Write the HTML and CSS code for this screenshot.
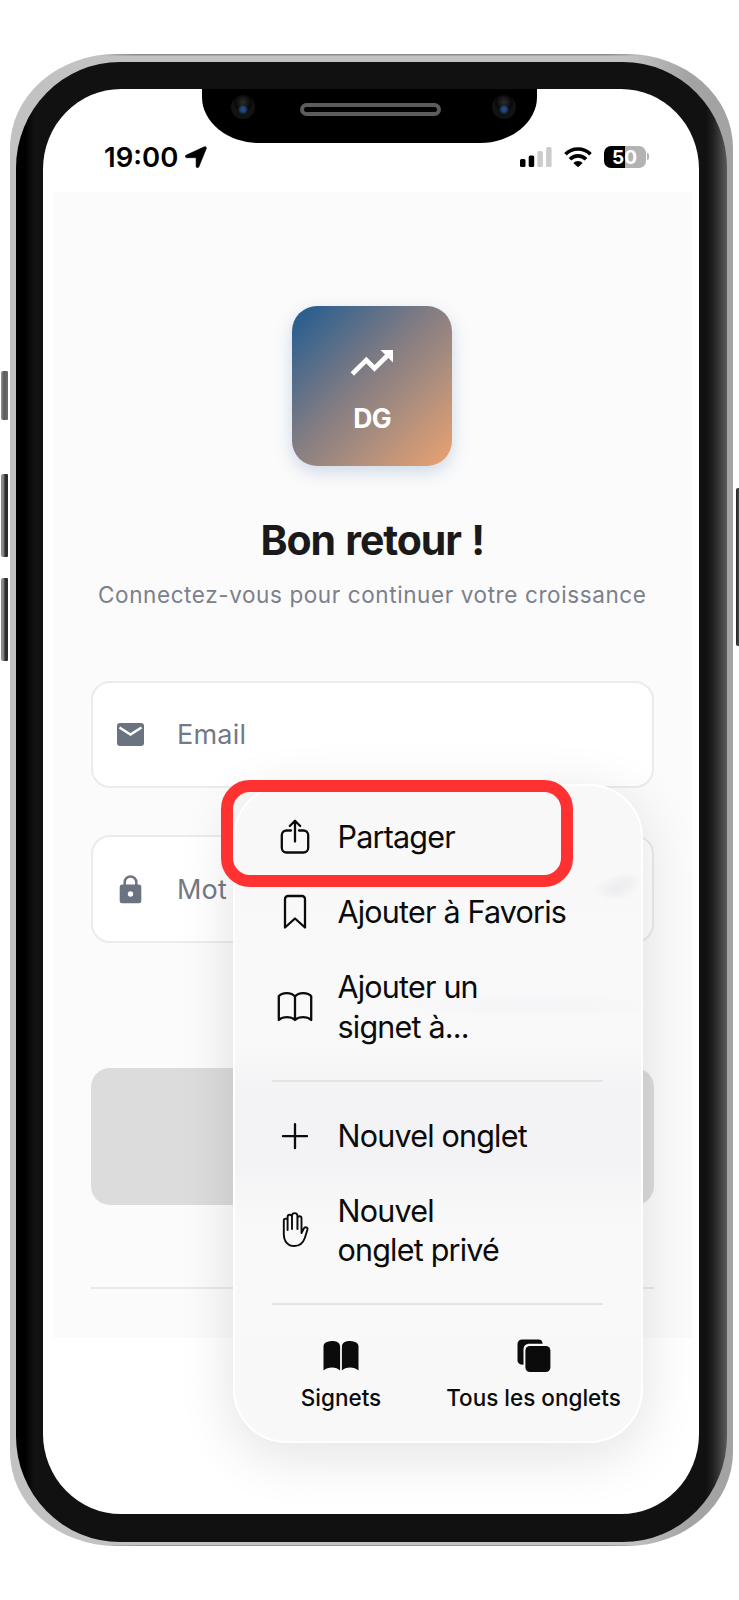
FILE: index.html
```
<!DOCTYPE html>
<html lang="fr">
<head>
<meta charset="utf-8">
<title>Bon retour</title>
<link rel="stylesheet" href="styles.css">
</head>
<body>
<div class="phone">
  <span class="side-button mute"></span>
  <span class="side-button volume-up"></span>
  <span class="side-button volume-down"></span>
  <span class="side-button power"></span>
  <div class="bezel">
    <div class="screen">
      <div class="notch">
        <span class="camera"></span>
        <span class="speaker"></span>
        <span class="camera"></span>
      </div>
      <header class="status">
        <span class="time">19:00</span>
        <svg class="location" width="22" height="22" viewBox="0 0 22 22"><path d="M1 9.200 19.300.8c1.400-.6 2.500.6 1.900 2L13.900 20.700c-.6 1.500-2.800 1.200-2.800-.5v-8.500H1.800c-1.600 0-2.200-1.800-.8-2.500z" stroke="#000" stroke-width=".6"/></svg>
        <svg class="signal" width="33" height="22" viewBox="0 0 33 22"><rect x="0" y="13" width="5.500" height="8" rx="1.500"/><rect x="8.700" y="9.500" width="5.500" height="11.500" rx="1.500"/><g fill="#ccc"><rect x="17.400" y="5" width="5.500" height="16" rx="1.500"/><rect x="26.100" y="1" width="5.500" height="20" rx="1.500"/></g></svg>
        <svg class="wifi" width="28" height="22" viewBox="0 0 28 22"><g fill="none" stroke="#000" stroke-width="3.700"><path d="M1.500 8.200a17.600 17.600 0 0 1 25 0"/><path d="M6 13.200a11.300 11.300 0 0 1 16 0"/></g><path d="M14 21.300 9.300 16.900a6.600 6.600 0 0 1 9.400 0z"/></svg>
        <span class="battery">50</span><span class="battery-tip"></span>
      </header>
      <main class="app">
        <div class="logo">
          <svg width="44" height="28" viewBox="0 0 44 28"><path d="M2.300 25 16.300 11l8.200 8.500L38 6" fill="none" stroke="#fff" stroke-width="4.700"/><path d="M30.500 1H43v12.500z" fill="#fff"/></svg>
          <span>DG</span>
        </div>
        <h1>Bon retour !</h1>
        <p class="subtitle">Connectez-vous pour continuer votre croissance</p>
        <div class="field">
          <svg width="27" height="23" viewBox="0 0 27 23"><rect width="27" height="23" rx="3" fill="#6b7280"/><path d="M2.500 4.500 13.500 11.500 24.500 4.500" fill="none" stroke="#fff" stroke-width="2.400"/></svg>
          <span>Email</span>
        </div>
        <div class="field">
          <svg width="27" height="29" viewBox="0 0 27 29"><path d="M7.700 11V7.300a5.800 5.800 0 0 1 11.600 0V11" fill="none" stroke="#6b7280" stroke-width="2.500"/><rect x="2.700" y="9.500" width="21.600" height="18.800" rx="2.500" fill="#6b7280"/><circle cx="13.500" cy="19" r="2.700" fill="#fff"/></svg>
          <span>Mot</span>
        </div>
        <div class="submit"></div>
        <div class="rule"></div>
      </main>
      <nav class="menu">
        <div class="item"><svg width="36" height="38" viewBox="0 0 36 38"><path d="M14 12.500H9.500a4.700 4.700 0 0 0-4.700 4.700v12.600a4.700 4.700 0 0 0 4.700 4.700h17a4.700 4.700 0 0 0 4.700-4.700V17.200a4.700 4.700 0 0 0-4.700-4.700H22M18 23.500V3M12.800 8 18 2.800 23.200 8"/></svg><span>Partager</span></div>
        <div class="item"><svg width="36" height="38" viewBox="0 0 36 38"><path d="M8 34.500V6a3 3 0 0 1 3-3h14a3 3 0 0 1 3 3v28.500L18 25.500z"/></svg><span>Ajouter à Favoris</span></div>
        <div class="item"><svg width="36" height="38" viewBox="0 0 36 38"><path d="M18 8.500C14.500 4 5 4 1.800 8.300V32C6 28.300 14 28.300 18 32c4-3.700 12-3.700 16.200 0V8.300C31 4 21.500 4 18 8.500V32"/></svg><span>Ajouter un<br>signet à...</span></div>
        <hr>
        <div class="item"><svg width="36" height="38" viewBox="0 0 36 38"><path d="M18 7.200v24M6 19.200h24"/></svg><span>Nouvel onglet</span></div>
        <div class="item"><svg class="hand" width="36" height="38" viewBox="0 0 36 38"><path d="M10.600 19V9.500a1.900 1.900 0 0 0-3.800 0V23c0 7.500 4.200 12 10.500 12 5.500 0 8.800-3 10.500-8l2.600-8.200c.7-2.600-2.400-3.600-3.600-1.300l-2.300 4.600V7.300a2 2 0 0 0-4 0V18M10.600 10V6a2.200 2.200 0 0 1 4.400 0v12M15 8V4.800a2.700 2.700 0 0 1 5.400 0V18"/></svg><span>Nouvel<br>onglet privé</span></div>
        <hr>
        <div class="tabs">
          <div class="tab signets"><svg width="36" height="34" viewBox="0 0 36 34"><path d="M17.100 31.500C13.500 27.600 4.500 27.600.5 31.500V7.500C.5 2.500 7 2 9.500 2s7.600 1 7.600 5.500zM18.900 31.500c3.600-3.900 12.600-3.900 16.600 0V7.500C35.500 2.500 29 2 26.500 2s-7.600 1-7.600 5.500z"/></svg><span>Signets</span></div>
          <div class="tab onglets"><svg width="34" height="34" viewBox="0 0 34 34"><path d="M5 .5h16.500c2.500 0 4 1.500 4.200 4.200H12.500c-4 0-6 2.200-6 6v15C2.500 25.700.5 24 .5 21.500V5A4.500 4.500 0 0 1 5 .5z"/><rect x="8.400" y="7" width="25" height="26" rx="4.500"/></svg><span>Tous les onglets</span></div>
        </div>
      </nav>
      <div class="highlight"></div>
    </div>
  </div>
</div>
</body>
</html>
```
FILE: styles.css
```
* { box-sizing: border-box; }
body {
  margin: 0;
  padding: 54px 6px 0 9.500px;
  height: 1600px;
  overflow: hidden;
  background: #fff;
  font-family: Inter, "Liberation Sans", sans-serif;
}
svg { display: block; flex: none; }

.phone {
  position: relative;
  width: 723.500px;
  height: 1492px;
  padding: 7.500px 6px 4.500px;
  border-radius: 106px / 94px;
  background:
    linear-gradient(90deg, transparent, #8c8c8c 8% 92%, transparent) 50% 0 / 560px 1.500px no-repeat,
    linear-gradient(90deg, transparent, #999 8% 92%, transparent) 50% 100% / 560px 1px no-repeat,
    linear-gradient(90deg, #c2c2c2 0 86%, #a3a3a3 94%);
}
.side-button {
  position: absolute;
  left: -8.500px;
  width: 6.500px;
  border-radius: 2px 1px 1px 2px;
  background: linear-gradient(90deg, #8d8d8d 30%, #2e2e2e 60%);
}
.mute { top: 317px; height: 49px; background: linear-gradient(90deg, #999, #5c5c5c 40%, #6c6c6c); }
.volume-up { top: 420px; height: 83px; }
.volume-down { top: 524px; height: 83px; }
.power { left: 726.500px; top: 434px; width: 5px; height: 158px; background: linear-gradient(90deg, #222, #666); }

.bezel {
  height: 100%;
  padding: 27.500px 28px 28px 27.500px;
  border-radius: 104px / 106px;
  background: linear-gradient(90deg, #000 0 1.200%, #111 2.500% 97%, #202020 98%, #5a5a5a 100%);
}
.screen {
  position: relative;
  height: 100%;
  border-radius: 78px / 80px;
  overflow: hidden;
  background: #fff;
}
.notch {
  position: absolute;
  top: -1px;
  left: 158.500px;
  width: 335.500px;
  height: 55px;
  padding: 0 21px 16px 29px;
  display: flex;
  align-items: center;
  justify-content: space-between;
  border-radius: 0 0 57px 57px / 0 0 46px 46px;
  background: #000;
}
.camera {
  width: 24px;
  height: 24px;
  margin-top: -2px;
  border-radius: 50%;
  background: radial-gradient(circle at 50% 60%, #26497f 0 2px, #132849 4px, transparent 5px), radial-gradient(circle at 50% 30%, #2c2c2c 0, #111 6px, #080808 8px, #121212 10px);
}
.speaker {
  width: 141px;
  height: 13px;
  margin: 4px 5px 0 0;
  border: 4px solid #5c5c5c;
  border-radius: 7px;
}

.status {
  height: 102.500px;
  padding: 57px 0 0 61px;
  display: flex;
  align-items: flex-start;
}
.time {
  width: 81px;
  font-size: 27.500px;
  font-weight: 600;
  line-height: 23px;
}
.location { margin-left: 0; }
.signal { margin-left: 312.500px; }
.wifi { margin-left: 11.500px; }
.battery {
  width: 42px;
  height: 22.500px;
  margin: -.5px 0 0 11.500px;
  border-radius: 7px;
  background: linear-gradient(90deg, #000 50%, #b3b3b3 50%);
  color: #fff;
  font-size: 19px;
  font-weight: 700;
  line-height: 23px;
  text-align: center;
}
.battery-tip { width: 2px; height: 7px; margin: 7px 0 0 1px; border-radius: 0 3px 3px 0; background: #b3b3b3; }

.app {
  height: 1146.500px;
  margin: 0 7.500px 0 9.500px;
  padding: 114.500px 38px 0 38.500px;
  background: #fbfbfb;
}
.logo {
  width: 160px;
  height: 160px;
  margin: 0 auto;
  padding-top: 42.500px;
  display: flex;
  flex-direction: column;
  align-items: center;
  border-radius: 25px;
  background: linear-gradient(135deg, #2c5f8f 6%, #7f7b83 43%, #a98d7e 66%, #e8a172 98%);
  box-shadow: 0 6px 18px rgba(44, 95, 160, .22);
  color: #fff;
}
.logo span { margin-top: 24.500px; font-size: 26.500px; font-weight: 700; line-height: 34px; letter-spacing: -.5px; }
h1 {
  margin: 49px 0 15px;
  color: #1a1a1a;
  font-size: 41px;
  font-weight: 700;
  line-height: 50px;
  text-align: center;
  letter-spacing: -1.100px;
  word-spacing: 1.800px;
  white-space: nowrap;
}
.subtitle {
  margin: 0 -20px 70.500px;
  color: #7b808c;
  font-size: 22.500px;
  line-height: 30px;
  text-align: center;
  letter-spacing: .6px;
  white-space: nowrap;
}
.field {
  height: 107.500px;
  margin-bottom: 47px;
  padding: 1px 0 0 23.500px;
  display: flex;
  align-items: center;
  gap: 33.500px;
  border: 2px solid #ebebec;
  border-radius: 19px;
  background: #fff;
  color: #737985;
  font-size: 27px;
  letter-spacing: .2px;
}
.submit { height: 137.500px; margin-top: 125px; border-radius: 19px; background: #dcdcdc; }
.rule { height: 2px; margin-top: 82px; background: #e8e8ea; }

.menu {
  position: absolute;
  left: 189.500px;
  top: 694.500px;
  width: 410px;
  height: 659.500px;
  padding: 14px 0 0;
  border: 2px solid #fff;
  border-radius: 54px;
  background:
    radial-gradient(ellipse 22px 12px at 380px 103px, #ededef 10%, transparent),
    radial-gradient(ellipse 16px 11px at 391px 96px, #efeff1 10%, transparent),
    radial-gradient(ellipse 150px 12px at 300px 220px, #f6f6f8 30%, transparent),
    linear-gradient(#f8f8f9 0, #f9f9fa 260px, #f3f3f5 310px, #f3f3f5 375px, #f9f9f9 440px, #f8f8f8);
  box-shadow: 0 12px 56px rgba(20, 20, 25, .12);
}
.item {
  padding: 17.750px 0 17.750px 42px;
  display: flex;
  align-items: center;
  gap: 25px;
  color: #0b0b0b;
  font-size: 30.500px;
  line-height: 39.500px;
  letter-spacing: -.8px;
  white-space: nowrap;
}
.item svg { fill: none; stroke: #0b0b0b; stroke-width: 2.300; stroke-linecap: round; stroke-linejoin: round; }
.item .hand { stroke-width: 1.900; }
hr { height: 2px; margin: 15.500px 37.500px 16.500px 37px; border: 0; background: #e4e4e5; }
.tabs { margin-top: 33.500px; display: flex; }
.tab { display: flex; flex-direction: column; align-items: center; gap: 10px; font-size: 22.500px; font-weight: 500; line-height: 30px; letter-spacing: 0; white-space: nowrap; color: #0b0b0b; fill: #0b0b0b; }
.signets { width: 213px; }
.onglets { width: 172px; }

.highlight {
  position: absolute;
  left: 178px;
  top: 690.500px;
  width: 352px;
  height: 107.500px;
  border: 12px solid #ff3131;
  border-radius: 29px;
}
```
